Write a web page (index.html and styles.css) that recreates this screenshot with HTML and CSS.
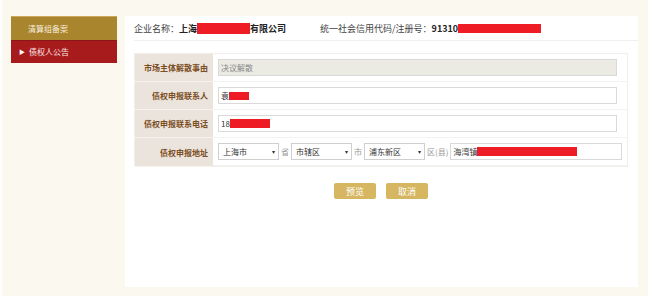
FILE: index.html
```html
<!DOCTYPE html>
<html lang="zh-CN">
<head>
    <meta charset="UTF-8">
    <title>债权人公告</title>
    <link rel="stylesheet" href="styles.css">
</head>
<body>
    <div class="page">
        <div class="side-menu">
            <div class="menu-item">清算组备案</div>
            <div class="menu-item active"><span class="arrow">&#9654;</span>债权人公告</div>
        </div>
        <div class="main">
            <div class="company-bar">
                <span class="field">企业名称：<b>上海</b><span class="mask mask-name"></span><b>有限公司</b></span>
                <span class="field code">统一社会信用代码/注册号：<b>91310</b><span class="mask mask-code"></span></span>
            </div>
            <table class="form-table">
                <tr>
                    <th>市场主体解散事由</th>
                    <td><input class="text-input" type="text" value="决议解散" disabled></td>
                </tr>
                <tr>
                    <th>债权申报联系人</th>
                    <td><div class="text-input filled">袁<span class="mask mask-person"></span></div></td>
                </tr>
                <tr>
                    <th>债权申报联系电话</th>
                    <td><div class="text-input filled">18<span class="mask mask-phone"></span></div></td>
                </tr>
                <tr>
                    <th>债权申报地址</th>
                    <td class="address">
                        <div class="select s1">上海市<span class="caret">&#9662;</span></div>
                        <span class="unit">省</span>
                        <div class="select s2">市辖区<span class="caret">&#9662;</span></div>
                        <span class="unit">市</span>
                        <div class="select s3">浦东新区<span class="caret">&#9662;</span></div>
                        <span class="unit">区(县)</span>
                        <div class="text-input street">海湾镇<span class="mask mask-street"></span></div>
                    </td>
                </tr>
            </table>
            <div class="actions">
                <button class="btn">预览</button>
                <button class="btn">取消</button>
            </div>
        </div>
    </div>
</body>
</html>
```

FILE: styles.css
```css
body {
    margin: 0;
    background: #fff;
    font-family: "Noto Sans CJK SC", "Liberation Sans", sans-serif;
    font-size: 8px;
    color: #333;
}

.page {
    margin-left: 2px;
    height: 296px;
    box-sizing: border-box;
    padding: 16px 10px 9px 9px;
    background: #fbf8f0;
    display: flex;
    gap: 8px;
}

.side-menu {
    width: 106px;
    flex-shrink: 0;
}

.menu-item {
    height: 24px;
    line-height: 23px;
    padding-left: 17px;
    background: #a9852e;
    color: #f7eedc;
    font-size: 8px;
    box-sizing: border-box;
    border-top: 1px solid #c9a85a;
}

.menu-item.active {
    height: 23px;
    line-height: 22px;
    background: #a81b1d;
    color: #fae6e6;
    padding-left: 8px;
    border-top: 1px solid #8c1517;
}

.arrow {
    font-size: 6px;
    margin-right: 4px;
    vertical-align: 1px;
    color: #fff;
}

.main {
    flex: 1;
    background: #fff;
    padding-left: 9px;
}

.company-bar {
    height: 24px;
    border-bottom: 1px solid #efefef;
    display: flex;
    align-items: center;
    font-size: 9px;
    color: #444;
}

.company-bar b {
    color: #222;
}

.field {
    display: flex;
    align-items: center;
}

.code {
    margin-left: 34px;
}

.mask {
    display: inline-block;
    background: #ee1c25;
}

.mask-name { width: 53px; height: 11px; }
.mask-code { width: 83px; height: 9px; }
.mask-person { width: 20px; height: 8px; }
.mask-phone { width: 40px; height: 9px; }
.mask-street { width: 100px; height: 9px; }

.form-table {
    margin-top: 12px;
    width: 494px;
    border-collapse: collapse;
    border: 1px solid #f1eeea;
}

.form-table th {
    width: 73px;
    height: 27px;
    padding: 0 5px 0 0;
    background: #ebe4dd;
    color: #7b4e23;
    font-size: 8px;
    font-weight: bold;
    text-align: right;
    white-space: nowrap;
    border-bottom: 1px solid #f6f2ee;
}

.form-table td {
    padding: 0 0 0 5px;
    border-bottom: 1px solid #f3f3f3;
}

.text-input {
    width: 399px;
    height: 17px;
    box-sizing: border-box;
    border: 1px solid #d9d9d9;
    padding: 0 2px;
    font-family: inherit;
    font-size: 8px;
    color: #333;
    background: #fff;
    display: flex;
    align-items: center;
}

.text-input:disabled {
    background: #ebebe4;
    color: #888;
}

.address {
    display: flex;
    align-items: center;
    height: 27px;
    white-space: nowrap;
}

.select {
    width: 61px;
    height: 17px;
    box-sizing: border-box;
    border: 1px solid #cfcfcf;
    padding: 0 3px 0 4px;
    display: flex;
    align-items: center;
    justify-content: space-between;
    color: #333;
}

.caret {
    font-size: 6px;
    color: #333;
}

.unit {
    color: #999;
    margin: 0 2px;
}

.street {
    width: 172px;
    height: 17px;
}

.actions {
    width: 494px;
    display: flex;
    justify-content: center;
    gap: 10px;
    margin-top: 16px;
}

.btn {
    width: 42px;
    height: 16px;
    border: none;
    border-radius: 2px;
    background: #d6b660;
    color: #fff;
    font-family: inherit;
    font-size: 9px;
    padding: 0;
}
```
